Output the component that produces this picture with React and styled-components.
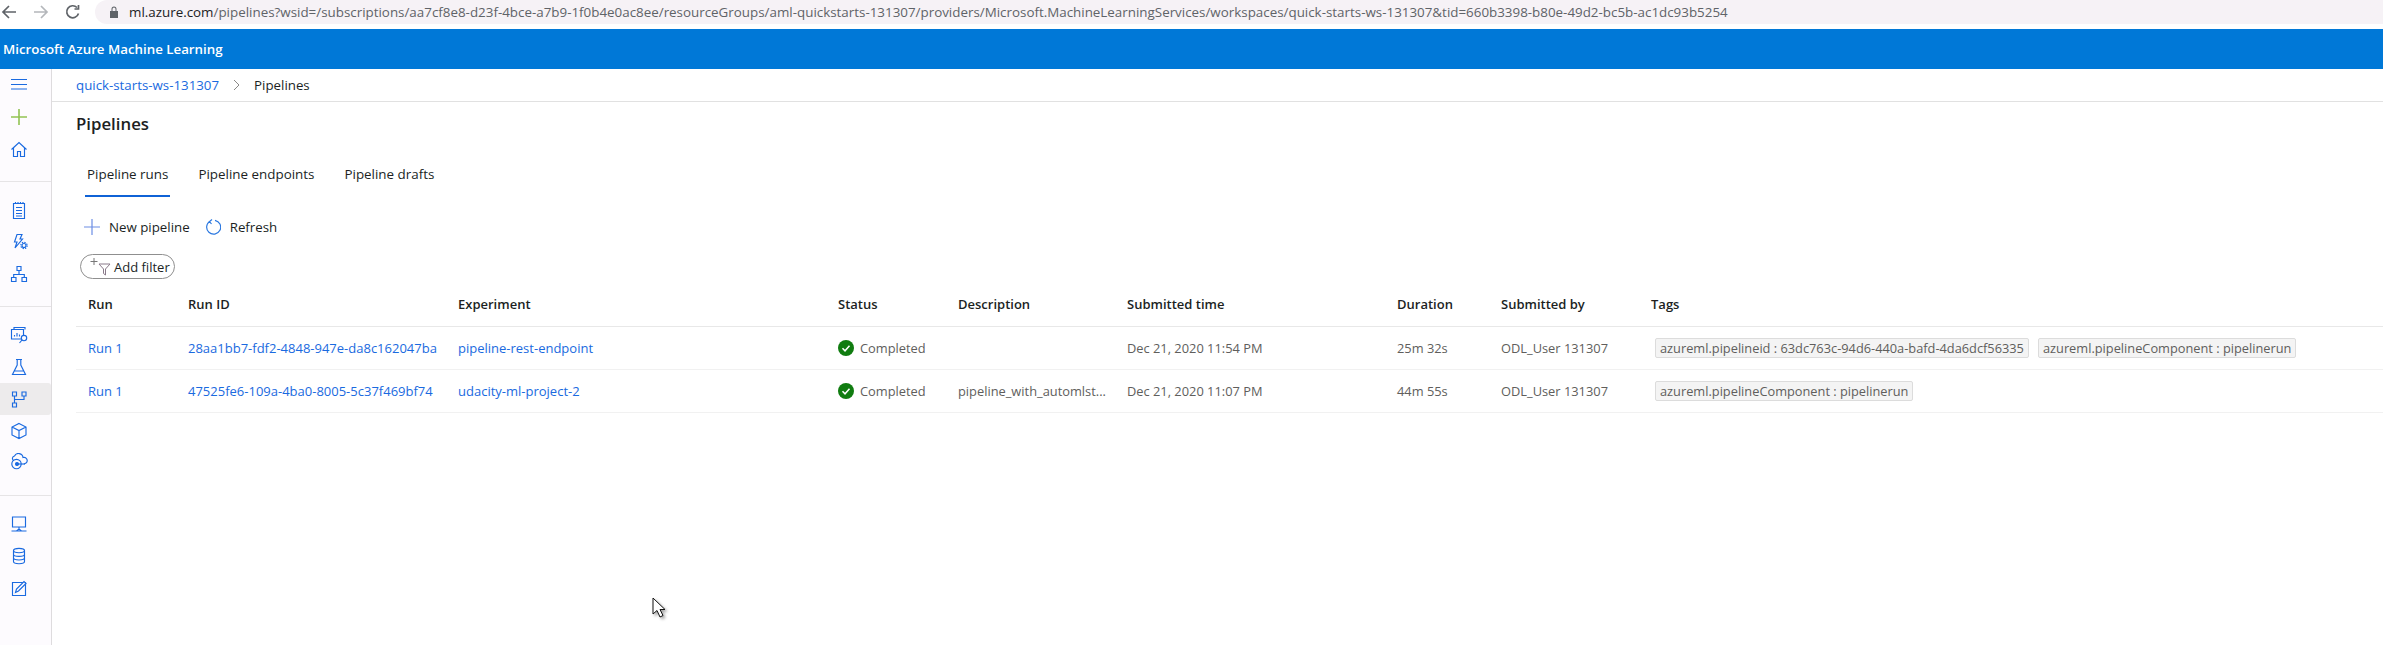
import React from 'react';
import styled, { createGlobalStyle } from 'styled-components';

const BLUE = '#1a6ae0';
const FONT = '"Open Sans", "Noto Sans", sans-serif';

const GlobalStyle = createGlobalStyle`
  html, body {
    margin: 0;
    padding: 0;
    background: #fff;
    overflow: hidden;
  }
  * { box-sizing: border-box; }
`;

const Page = styled.div`
  position: relative;
  display: flex;
  flex-direction: column;
  width: 2383px;
  height: 645px;
  overflow: hidden;
  font-family: ${FONT};
  font-size: 13px;
  color: #201f1f;
`;

const BrowserBar = styled.div`
  display: flex;
  align-items: center;
  height: 24px;
  margin-bottom: 5px;
  padding-left: 1px;
`;

const NavButton = styled.svg`
  flex: none;
  width: 16px;
  height: 16px;
  margin-right: 16px;
  fill: none;
  stroke: ${p => p.$muted ? '#b4b7bb' : '#5f6368'};
  stroke-width: 1.7;
`;

const AddressPill = styled.div`
  flex: 1;
  display: flex;
  align-items: center;
  height: 24px;
  margin-left: -2px;
  padding-left: 14px;
  background: #f6f2f6;
  border-radius: 12px 0 0 12px;
`;

const Lock = styled.svg`
  width: 10px;
  height: 12px;
  margin-right: 10px;
  fill: #5f6368;
`;

const UrlText = styled.span`
  font-size: 13.38px;
  color: #5f6368;
  white-space: nowrap;
`;

const UrlHost = styled.span`
  color: #202124;
`;

const AppHeader = styled.header`
  flex: none;
  display: flex;
  align-items: center;
  height: 40px;
  padding-left: 3px;
  background: #0078d7;
  color: #fff;
  font-size: 13.3px;
  font-weight: 600;
`;

const Body = styled.div`
  flex: 1;
  display: flex;
  min-height: 0;
`;

const Sidebar = styled.nav`
  flex: none;
  width: 52px;
  background: #fdfbfe;
  border-right: 1px solid #dedcde;
`;

const SideGroup = styled.div`
  padding: ${p => p.$first ? '0' : '12px'} 0 16px;
  border-bottom: ${p => p.$last ? 'none' : '1px solid #e6e4e6'};
`;

const SideItem = styled.div`
  display: flex;
  align-items: center;
  height: 32px;
  padding-left: 9px;
  background: ${p => p.$active ? '#edebec' : 'transparent'};
  border-radius: ${p => p.$active ? '0 3px 3px 0' : '0'};
`;

const SideIcon = styled.svg`
  width: 20px;
  height: 20px;
  fill: none;
  stroke: ${p => p.$color || BLUE};
  stroke-width: 1.15;
`;

const Main = styled.main`
  flex: 1;
  min-width: 0;
`;

const Breadcrumb = styled.div`
  display: flex;
  align-items: center;
  height: 33px;
  padding-left: 24px;
  border-bottom: 1px solid #e1e1e1;
  font-size: 13.3px;
`;

const Crumb = styled.span`
  color: ${BLUE};
`;

const CrumbCurrent = styled.span`
  color: #201f1f;
`;

const CrumbChevron = styled.svg`
  width: 8px;
  height: 12px;
  margin: 0 14px 0 13px;
  fill: none;
  stroke: #8a8886;
  stroke-width: 1;
`;

const Content = styled.div`
  padding-left: 24px;
`;

const Title = styled.h1`
  margin: 0;
  padding-top: 10px;
  height: 55px;
  font-size: 16.8px;
  line-height: 23px;
  font-weight: 600;
`;

const Tabs = styled.div`
  display: flex;
  gap: 26px;
  height: 40px;
  margin-left: 9px;
  font-size: 13.4px;
`;

const Tab = styled.div`
  display: flex;
  align-items: center;
  height: 40px;
  padding: 0 2px 5px;
  color: #201f1f;
  border-bottom: 2px solid ${p => p.$active ? '#0f62d6' : 'transparent'};
`;

const CommandBar = styled.div`
  display: flex;
  align-items: center;
  height: 32px;
  margin: 14px 0 11px 8px;
  font-size: 13.3px;
`;

const Command = styled.div`
  display: flex;
  align-items: center;
  gap: 9px;
  margin-right: 15px;
`;

const CommandIcon = styled.svg`
  width: 16px;
  height: 16px;
  fill: none;
  stroke: ${p => p.$color};
  stroke-width: 1.2;
`;

const FilterPill = styled.div`
  display: inline-flex;
  align-items: center;
  width: 95px;
  height: 25px;
  margin-left: 4px;
  padding-left: 9px;
  border: 1px solid #8f8f8f;
  border-radius: 12.5px;
`;

const FilterIcon = styled.svg`
  width: 24px;
  height: 20px;
  fill: none;
  stroke-width: 1;
`;

const Table = styled.div`
  margin-top: 2px;
`;

const Row = styled.div`
  display: grid;
  grid-template-columns: 100px 270px 380px 120px 169px 270px 104px 150px 1fr;
  align-items: center;
  height: ${p => p.$head ? '44px' : '43px'};
  border-bottom: 1px solid ${p => p.$head ? '#e8e8e8' : '#f1f1f1'};
`;

const HeadCell = styled.div`
  padding-left: 12px;
  font-weight: 600;
  color: #201f1f;
`;

const Cell = styled.div`
  display: flex;
  align-items: center;
  padding-left: 12px;
  white-space: nowrap;
  font-size: ${p => p.$link ? '13px' : '12.85px'};
  color: ${p => p.$link ? BLUE : '#605e5c'};
`;

const StatusIcon = styled.svg`
  width: 16px;
  height: 16px;
  margin-right: 6px;
`;

const TagCell = styled(Cell)`
  gap: 9px;
  padding-left: 16px;
`;

const Tag = styled.span`
  display: flex;
  align-items: center;
  height: 20px;
  padding: 0 4px;
  font-size: 12.8px;
  color: #605e5c;
  background: #f4f4f4;
  border: 1px solid #dcdcdc;
  border-radius: 2px;
`;

const Cursor = styled.svg`
  position: absolute;
  left: 652px;
  top: 597px;
  width: 15px;
  height: 22px;
  filter: drop-shadow(2px 2px 1.5px rgba(0, 0, 0, 0.35));
`;

const icons = {
  menu: <path d="M2 4.5h16M2 9.5h16M2 14h16" />,
  plus: <path d="M10 2v16M2 10h16" strokeWidth="1.6" />,
  home: <path d="M2.5 10.5 10 3.5l7.5 7M4.5 9v8.5h4v-5h3v5h4V9" />,
  notes: <path d="M4.5 3.5h11v15h-11zM6.5 2v2M9 2v2M11.5 2v2M14 2v2M7 7.5h6M7 10.5h6M7 13.5h6M7 16h6" />,
  spark: <><path d="M8 2.5h5L11 7h2.5L6 16l2-6H5.5z" /><circle cx="15" cy="13.5" r="2" /><circle cx="15" cy="13.5" r="3.2" strokeDasharray="1.4 1.1" /></>,
  tree: <path d="M8 2.5h4v4H8zM2.5 13.5h4.5v4H2.5zM13 13.5h4.5v4H13zM10 6.5v4M4.7 13.5v-3h10.6v3" />,
  charts: <><path d="M5 4.5V2.5h11v2M2.5 4.5h12v9.5h-12zM5.5 11.5v-1.5M8 11.5V8M10.5 11.5V9.5" /><circle cx="15" cy="13" r="2.7" fill="#fdfbfe" /><path d="m13 15-2.5 3" /></>,
  flask: <path d="M7 2.5h6M8.2 2.5V8L3.5 17.5h13L11.8 8V2.5M5.5 14h9" />,
  pipeline: <path d="M3.5 3h4v4h-4zM13 3h4v4h-4zM3.5 14h4v4h-4zM5.5 7v7M5.5 10.5h9.5V7" />,
  cube: <path d="M10 2.5 17 6v8l-7 3.5L3 14V6zM3 6l7 3.5L17 6M10 9.5v8" />,
  cloud: <><path d="M5 7.500H4.500a2.500 2.500 0 0 1 1-4.500A4.500 4.500 0 0 1 14 4.500a3.200 3.200 0 0 1 3 5.500l-2 1" /><circle cx="7.500" cy="11" r="4.700" /><circle cx="8" cy="11" r="1.500" fill={BLUE} /><path d="M8 11h8" /></>,
  computer: <path d="M3.500 3h13v10h-13zM10 13v2M2.500 17h15M7.500 17l2.500-2 2.500 2" />,
  database: <><ellipse cx="10" cy="4.500" rx="5.500" ry="2.200" /><path d="M4.500 4.500v11c0 1.200 2.500 2.200 5.500 2.200s5.500-1 5.500-2.200v-11M4.500 8.200c0 1.200 2.500 2.200 5.500 2.200s5.500-1 5.500-2.200M4.500 11.800c0 1.200 2.500 2.200 5.500 2.200s5.500-1 5.500-2.200" /></>,
  edit: <><path d="M3.500 4.500h13v13h-13z" /><path d="M6.500 14.500 7.500 11 15 3.500l2 2-7.500 7.500z" fill="#fdfbfe" /></>,
};

const sideGroups = [
  [{ icon: 'menu' }, { icon: 'plus', color: '#92c353' }, { icon: 'home' }],
  [{ icon: 'notes' }, { icon: 'spark' }, { icon: 'tree' }],
  [{ icon: 'charts' }, { icon: 'flask' }, { icon: 'pipeline', active: true }, { icon: 'cube' }, { icon: 'cloud' }],
  [{ icon: 'computer' }, { icon: 'database' }, { icon: 'edit' }],
];

const columns = ['Run', 'Run ID', 'Experiment', 'Status', 'Description', 'Submitted time', 'Duration', 'Submitted by', 'Tags'];

const runs = [
  {
    id: '28aa1bb7-fdf2-4848-947e-da8c162047ba',
    experiment: 'pipeline-rest-endpoint',
    description: '',
    time: 'Dec 21, 2020 11:54 PM',
    duration: '25m 32s',
    tags: ['azureml.pipelineid : 63dc763c-94d6-440a-bafd-4da6dcf56335', 'azureml.pipelineComponent : pipelinerun'],
  },
  {
    id: '47525fe6-109a-4ba0-8005-5c37f469bf74',
    experiment: 'udacity-ml-project-2',
    description: 'pipeline_with_automlst...',
    time: 'Dec 21, 2020 11:07 PM',
    duration: '44m 55s',
    tags: ['azureml.pipelineComponent : pipelinerun'],
  },
];

const App = () => (
  <Page>
    <GlobalStyle />
    <BrowserBar>
      <NavButton viewBox="0 0 16 16"><path d="M15 8H2M8 2 2 8l6 6" /></NavButton>
      <NavButton viewBox="0 0 16 16" $muted><path d="M1 8h13M8 2l6 6-6 6" /></NavButton>
      <NavButton viewBox="0 0 16 16"><path d="M13.500 9.500A6 6 0 1 1 12 3.500M13.500 1v4h-4" /></NavButton>
      <AddressPill>
        <Lock viewBox="0 0 10 12"><path d="M1 5h8v7H1zM2.500 5V3a2.500 2.500 0 0 1 5 0v2H6.500V3a1.500 1.500 0 0 0-3 0v2z" /></Lock>
        <UrlText>
          <UrlHost>ml.azure.com</UrlHost>/pipelines?wsid=/subscriptions/aa7cf8e8-d23f-4bce-a7b9-1f0b4e0ac8ee/resourceGroups/aml-quickstarts-131307/providers/Microsoft.MachineLearningServices/workspaces/quick-starts-ws-131307&tid=660b3398-b80e-49d2-bc5b-ac1dc93b5254
        </UrlText>
      </AddressPill>
    </BrowserBar>
    <AppHeader>Microsoft Azure Machine Learning</AppHeader>
    <Body>
      <Sidebar>
        {sideGroups.map((group, i) => (
          <SideGroup key={i} $first={i === 0} $last={i === sideGroups.length - 1}>
            {group.map(item => (
              <SideItem key={item.icon} $active={item.active}>
                <SideIcon viewBox="0 0 20 20" $color={item.color}>{icons[item.icon]}</SideIcon>
              </SideItem>
            ))}
          </SideGroup>
        ))}
      </Sidebar>
      <Main>
        <Breadcrumb>
          <Crumb>quick-starts-ws-131307</Crumb>
          <CrumbChevron viewBox="0 0 8 12"><path d="m2 1 5 5-5 5" /></CrumbChevron>
          <CrumbCurrent>Pipelines</CrumbCurrent>
        </Breadcrumb>
        <Content>
          <Title>Pipelines</Title>
          <Tabs>
            <Tab $active>Pipeline runs</Tab>
            <Tab>Pipeline endpoints</Tab>
            <Tab>Pipeline drafts</Tab>
          </Tabs>
          <CommandBar>
            <Command>
              <CommandIcon viewBox="0 0 16 16" $color="#6c8ee4"><path d="M8 0v16M0 8h16" /></CommandIcon>
              New pipeline
            </Command>
            <Command>
              <CommandIcon viewBox="0 0 16 16" $color="#2b78e0"><path d="M5 2.200A7 7 0 1 0 10 1.300M7 .5 4.500 2.500 6.500 5" /></CommandIcon>
              Refresh
            </Command>
          </CommandBar>
          <FilterPill>
            <FilterIcon viewBox="0 0 24 20">
              <path d="M4 1v7M.5 4.500h7" stroke="#777" />
              <path d="M9 7h11l-4.500 5v6l-2-1.500V12z" stroke="#8a7a8a" />
            </FilterIcon>
            Add filter
          </FilterPill>
          <Table>
            <Row $head>
              {columns.map(name => <HeadCell key={name}>{name}</HeadCell>)}
            </Row>
            {runs.map(run => (
              <Row key={run.id}>
                <Cell $link>Run 1</Cell>
                <Cell $link>{run.id}</Cell>
                <Cell $link>{run.experiment}</Cell>
                <Cell>
                  <StatusIcon viewBox="0 0 16 16">
                    <circle cx="8" cy="8" r="8" fill="#107c10" />
                    <path d="m4.500 8.300 2.500 2.500 4.500-5" fill="none" stroke="#fff" strokeWidth="1.500" />
                  </StatusIcon>
                  Completed
                </Cell>
                <Cell>{run.description}</Cell>
                <Cell>{run.time}</Cell>
                <Cell>{run.duration}</Cell>
                <Cell>ODL_User 131307</Cell>
                <TagCell>
                  {run.tags.map(tag => <Tag key={tag}>{tag}</Tag>)}
                </TagCell>
              </Row>
            ))}
          </Table>
        </Content>
      </Main>
    </Body>
    <Cursor viewBox="0 0 15 22">
      <path d="M1 1v16l4-3.500 3 6.500 3-1.500-3-6h5z" fill="#fff" stroke="#111" strokeWidth="1" />
    </Cursor>
  </Page>
);

export default App;
